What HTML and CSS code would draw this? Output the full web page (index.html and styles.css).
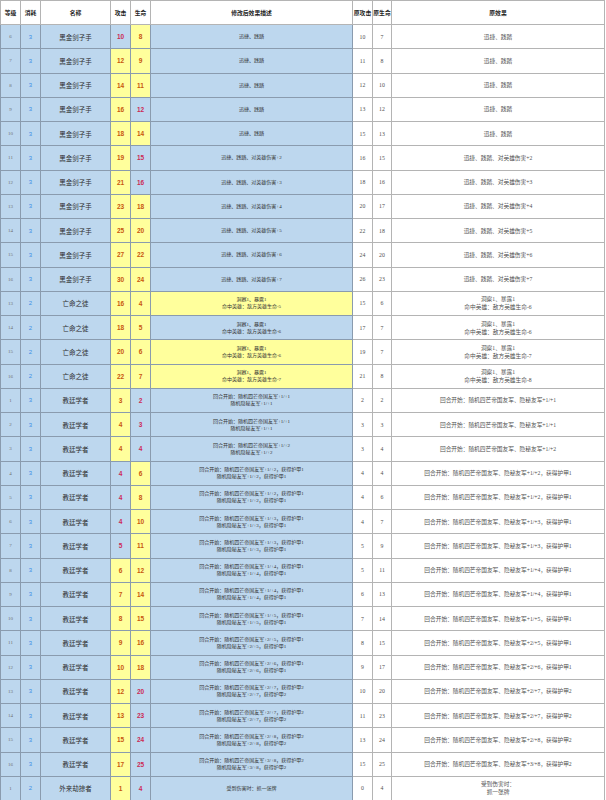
FILE: index.html
```html
<!DOCTYPE html>
<html lang="zh-CN">
<head>
<meta charset="utf-8">
<title>卡牌数值修改</title>
<link rel="stylesheet" href="styles.css">
</head>
<body>
<table class="sheet">
<colgroup>
<col class="c-lv"><col class="c-cost"><col class="c-name"><col class="c-atk"><col class="c-hp"><col class="c-desc"><col class="c-oatk"><col class="c-ohp"><col class="c-odesc">
</colgroup>
<thead>
<tr><th>等级</th><th>消耗</th><th>名称</th><th>攻击</th><th>生命</th><th>修改后效果描述</th><th>原攻击</th><th>原生命</th><th>原效果</th></tr>
</thead>
<tbody>
<tr><td class="lv">6</td><td class="cost">3</td><td class="name">黑金剑子手</td><td class="num">10</td><td class="num chg">8</td><td class="desc">迅捷、践踏</td><td class="orig">10</td><td class="orig">7</td><td class="odesc">迅捷、践踏</td></tr>
<tr><td class="lv">7</td><td class="cost">3</td><td class="name">黑金剑子手</td><td class="num chg">12</td><td class="num chg">9</td><td class="desc">迅捷、践踏</td><td class="orig">11</td><td class="orig">8</td><td class="odesc">迅捷、践踏</td></tr>
<tr><td class="lv">8</td><td class="cost">3</td><td class="name">黑金剑子手</td><td class="num chg">14</td><td class="num chg">11</td><td class="desc">迅捷、践踏</td><td class="orig">12</td><td class="orig">10</td><td class="odesc">迅捷、践踏</td></tr>
<tr><td class="lv">9</td><td class="cost">3</td><td class="name">黑金剑子手</td><td class="num chg">16</td><td class="num">12</td><td class="desc">迅捷、践踏</td><td class="orig">13</td><td class="orig">12</td><td class="odesc">迅捷、践踏</td></tr>
<tr><td class="lv">10</td><td class="cost">3</td><td class="name">黑金剑子手</td><td class="num chg">18</td><td class="num chg">14</td><td class="desc">迅捷、践踏</td><td class="orig">15</td><td class="orig">13</td><td class="odesc">迅捷、践踏</td></tr>
<tr><td class="lv">11</td><td class="cost">3</td><td class="name">黑金剑子手</td><td class="num chg">19</td><td class="num">15</td><td class="desc">迅捷、践踏、对英雄伤害+2</td><td class="orig">16</td><td class="orig">15</td><td class="odesc">迅捷、践踏、对英雄伤害+2</td></tr>
<tr><td class="lv">12</td><td class="cost">3</td><td class="name">黑金剑子手</td><td class="num chg">21</td><td class="num">16</td><td class="desc">迅捷、践踏、对英雄伤害+3</td><td class="orig">18</td><td class="orig">16</td><td class="odesc">迅捷、践踏、对英雄伤害+3</td></tr>
<tr><td class="lv">13</td><td class="cost">3</td><td class="name">黑金剑子手</td><td class="num chg">23</td><td class="num chg">18</td><td class="desc">迅捷、践踏、对英雄伤害+4</td><td class="orig">20</td><td class="orig">17</td><td class="odesc">迅捷、践踏、对英雄伤害+4</td></tr>
<tr><td class="lv">14</td><td class="cost">3</td><td class="name">黑金剑子手</td><td class="num chg">25</td><td class="num chg">20</td><td class="desc">迅捷、践踏、对英雄伤害+5</td><td class="orig">22</td><td class="orig">18</td><td class="odesc">迅捷、践踏、对英雄伤害+5</td></tr>
<tr><td class="lv">15</td><td class="cost">3</td><td class="name">黑金剑子手</td><td class="num chg">27</td><td class="num chg">22</td><td class="desc">迅捷、践踏、对英雄伤害+6</td><td class="orig">24</td><td class="orig">20</td><td class="odesc">迅捷、践踏、对英雄伤害+6</td></tr>
<tr><td class="lv">16</td><td class="cost">3</td><td class="name">黑金剑子手</td><td class="num chg">30</td><td class="num chg">24</td><td class="desc">迅捷、践踏、对英雄伤害+7</td><td class="orig">26</td><td class="orig">23</td><td class="odesc">迅捷、践踏、对英雄伤害+7</td></tr>
<tr><td class="lv">13</td><td class="cost">2</td><td class="name">亡命之徒</td><td class="num chg">16</td><td class="num chg">4</td><td class="desc chg">洞察1、暴露1<br>命中英雄：敌方英雄生命-5</td><td class="orig">15</td><td class="orig">6</td><td class="odesc">洞察1、暴露1<br>命中英雄：敌方英雄生命-6</td></tr>
<tr><td class="lv">14</td><td class="cost">2</td><td class="name">亡命之徒</td><td class="num chg">18</td><td class="num chg">5</td><td class="desc">洞察1、暴露1<br>命中英雄：敌方英雄生命-6</td><td class="orig">17</td><td class="orig">7</td><td class="odesc">洞察1、暴露1<br>命中英雄：敌方英雄生命-6</td></tr>
<tr><td class="lv">15</td><td class="cost">2</td><td class="name">亡命之徒</td><td class="num chg">20</td><td class="num chg">6</td><td class="desc chg">洞察1、暴露1<br>命中英雄：敌方英雄生命-6</td><td class="orig">19</td><td class="orig">7</td><td class="odesc">洞察1、暴露1<br>命中英雄：敌方英雄生命-7</td></tr>
<tr><td class="lv">16</td><td class="cost">2</td><td class="name">亡命之徒</td><td class="num chg">22</td><td class="num chg">7</td><td class="desc chg">洞察1、暴露1<br>命中英雄：敌方英雄生命-7</td><td class="orig">21</td><td class="orig">8</td><td class="odesc">洞察1、暴露1<br>命中英雄：敌方英雄生命-8</td></tr>
<tr><td class="lv">1</td><td class="cost">3</td><td class="name">教廷学者</td><td class="num chg">3</td><td class="num">2</td><td class="desc">回合开始：随机四芒帝国友军+1/+1<br>随机隐秘友军+1/+1</td><td class="orig">2</td><td class="orig">2</td><td class="odesc">回合开始：随机四芒帝国友军、隐秘友军+1/+1</td></tr>
<tr><td class="lv">2</td><td class="cost">3</td><td class="name">教廷学者</td><td class="num chg">4</td><td class="num">3</td><td class="desc">回合开始：随机四芒帝国友军+1/+1<br>随机隐秘友军+1/+1</td><td class="orig">3</td><td class="orig">3</td><td class="odesc">回合开始：随机四芒帝国友军、隐秘友军+1/+1</td></tr>
<tr><td class="lv">3</td><td class="cost">3</td><td class="name">教廷学者</td><td class="num chg">4</td><td class="num">4</td><td class="desc">回合开始：随机四芒帝国友军+1/+2<br>随机隐秘友军+1/+2</td><td class="orig">3</td><td class="orig">4</td><td class="odesc">回合开始：随机四芒帝国友军、隐秘友军+1/+2</td></tr>
<tr><td class="lv">4</td><td class="cost">3</td><td class="name">教廷学者</td><td class="num">4</td><td class="num chg">6</td><td class="desc">回合开始：随机四芒帝国友军+1/+2，获得护甲1<br>随机隐秘友军+1/+2，获得护甲1</td><td class="orig">4</td><td class="orig">4</td><td class="odesc">回合开始：随机四芒帝国友军、隐秘友军+1/+2，获得护甲1</td></tr>
<tr><td class="lv">5</td><td class="cost">3</td><td class="name">教廷学者</td><td class="num">4</td><td class="num chg">8</td><td class="desc">回合开始：随机四芒帝国友军+1/+2，获得护甲1<br>随机隐秘友军+1/+2，获得护甲1</td><td class="orig">4</td><td class="orig">6</td><td class="odesc">回合开始：随机四芒帝国友军、隐秘友军+1/+2，获得护甲1</td></tr>
<tr><td class="lv">6</td><td class="cost">3</td><td class="name">教廷学者</td><td class="num">4</td><td class="num chg">10</td><td class="desc">回合开始：随机四芒帝国友军+1/+3，获得护甲1<br>随机隐秘友军+1/+3，获得护甲1</td><td class="orig">4</td><td class="orig">7</td><td class="odesc">回合开始：随机四芒帝国友军、隐秘友军+1/+3，获得护甲1</td></tr>
<tr><td class="lv">7</td><td class="cost">3</td><td class="name">教廷学者</td><td class="num">5</td><td class="num chg">11</td><td class="desc">回合开始：随机四芒帝国友军+1/+3，获得护甲1<br>随机隐秘友军+1/+3，获得护甲1</td><td class="orig">5</td><td class="orig">9</td><td class="odesc">回合开始：随机四芒帝国友军、隐秘友军+1/+3，获得护甲1</td></tr>
<tr><td class="lv">8</td><td class="cost">3</td><td class="name">教廷学者</td><td class="num chg">6</td><td class="num chg">12</td><td class="desc">回合开始：随机四芒帝国友军+1/+4，获得护甲1<br>随机隐秘友军+1/+4，获得护甲1</td><td class="orig">5</td><td class="orig">11</td><td class="odesc">回合开始：随机四芒帝国友军、隐秘友军+1/+4，获得护甲1</td></tr>
<tr><td class="lv">9</td><td class="cost">3</td><td class="name">教廷学者</td><td class="num chg">7</td><td class="num chg">14</td><td class="desc">回合开始：随机四芒帝国友军+1/+4，获得护甲1<br>随机隐秘友军+1/+4，获得护甲1</td><td class="orig">6</td><td class="orig">13</td><td class="odesc">回合开始：随机四芒帝国友军、隐秘友军+1/+4，获得护甲1</td></tr>
<tr><td class="lv">10</td><td class="cost">3</td><td class="name">教廷学者</td><td class="num chg">8</td><td class="num chg">15</td><td class="desc">回合开始：随机四芒帝国友军+1/+5，获得护甲1<br>随机隐秘友军+1/+5，获得护甲1</td><td class="orig">7</td><td class="orig">14</td><td class="odesc">回合开始：随机四芒帝国友军、隐秘友军+1/+5，获得护甲1</td></tr>
<tr><td class="lv">11</td><td class="cost">3</td><td class="name">教廷学者</td><td class="num chg">9</td><td class="num chg">16</td><td class="desc">回合开始：随机四芒帝国友军+2/+5，获得护甲1<br>随机隐秘友军+2/+5，获得护甲1</td><td class="orig">8</td><td class="orig">15</td><td class="odesc">回合开始：随机四芒帝国友军、隐秘友军+2/+5，获得护甲1</td></tr>
<tr><td class="lv">12</td><td class="cost">3</td><td class="name">教廷学者</td><td class="num chg">10</td><td class="num chg">18</td><td class="desc">回合开始：随机四芒帝国友军+2/+6，获得护甲1<br>随机隐秘友军+2/+6，获得护甲1</td><td class="orig">9</td><td class="orig">17</td><td class="odesc">回合开始：随机四芒帝国友军、隐秘友军+2/+6，获得护甲1</td></tr>
<tr><td class="lv">13</td><td class="cost">3</td><td class="name">教廷学者</td><td class="num chg">12</td><td class="num">20</td><td class="desc">回合开始：随机四芒帝国友军+2/+7，获得护甲2<br>随机隐秘友军+2/+7，获得护甲2</td><td class="orig">10</td><td class="orig">20</td><td class="odesc">回合开始：随机四芒帝国友军、隐秘友军+2/+7，获得护甲2</td></tr>
<tr><td class="lv">14</td><td class="cost">3</td><td class="name">教廷学者</td><td class="num chg">13</td><td class="num">23</td><td class="desc">回合开始：随机四芒帝国友军+2/+7，获得护甲2<br>随机隐秘友军+2/+7，获得护甲2</td><td class="orig">11</td><td class="orig">23</td><td class="odesc">回合开始：随机四芒帝国友军、隐秘友军+2/+7，获得护甲2</td></tr>
<tr><td class="lv">15</td><td class="cost">3</td><td class="name">教廷学者</td><td class="num chg">15</td><td class="num">24</td><td class="desc">回合开始：随机四芒帝国友军+2/+8，获得护甲2<br>随机隐秘友军+2/+8，获得护甲2</td><td class="orig">13</td><td class="orig">24</td><td class="odesc">回合开始：随机四芒帝国友军、隐秘友军+2/+8，获得护甲2</td></tr>
<tr><td class="lv">16</td><td class="cost">3</td><td class="name">教廷学者</td><td class="num chg">17</td><td class="num">25</td><td class="desc">回合开始：随机四芒帝国友军+3/+8，获得护甲2<br>随机隐秘友军+3/+8，获得护甲2</td><td class="orig">15</td><td class="orig">25</td><td class="odesc">回合开始：随机四芒帝国友军、隐秘友军+3/+8，获得护甲2</td></tr>
<tr><td class="lv">1</td><td class="cost">2</td><td class="name">外来劫掠者</td><td class="num chg">1</td><td class="num">4</td><td class="desc">受到伤害时：抓一张牌</td><td class="orig">0</td><td class="orig">4</td><td class="odesc">受到伤害时：<br>抓一张牌</td></tr>
</tbody>
</table>
</body>
</html>
```
FILE: styles.css
```css
html, body {
  margin: 0;
  padding: 0;
  background: #ffffff;
}

.sheet {
  border-collapse: collapse;
  table-layout: fixed;
  width: 605px;
  font-family: "Noto Sans CJK SC", "Noto Sans", sans-serif;
  color: #333333;
}

.c-lv { width: 20px; }
.c-cost { width: 20px; }
.c-name { width: 70px; }
.c-atk { width: 20px; }
.c-hp { width: 20px; }
.c-desc { width: 202px; }
.c-oatk { width: 20px; }
.c-ohp { width: 19px; }
.c-odesc { width: 213px; }

.sheet th,
.sheet td {
  padding: 0;
  text-align: center;
  vertical-align: middle;
  white-space: nowrap;
  overflow: hidden;
}

.sheet thead tr { height: 24px; }
.sheet tbody tr { height: 24.25px; }

.sheet th {
  background: #ffffff;
  border: 1px solid #b4b4b4;
  font-weight: bold;
  font-size: 5.8px;
  color: #1e1e1e;
}

.lv, .cost, .name, .num, .desc {
  background: #bdd7ee;
  border: 1px solid #8a9bae;
}

.lv {
  font-family: "Liberation Serif", serif;
  font-size: 5px;
  color: #6f6f6f;
}

.cost {
  font-family: "Liberation Sans", Arial, sans-serif;
  font-size: 6px;
  color: #3a8ee6;
}

.name {
  font-size: 6.5px;
  color: #2e2e2e;
}

.num {
  font-family: "Liberation Sans", Arial, sans-serif;
  font-weight: bold;
  font-size: 6.5px;
  color: #cc2a55;
}

.num.chg {
  background: #ffff9c;
  color: #c8560e;
}

.desc {
  font-family: "Liberation Serif", "Noto Sans CJK SC", serif;
  font-size: 5px;
  line-height: 7px;
  color: #333333;
}

.desc.chg {
  background: #ffff9c;
}

.orig, .odesc {
  background: #ffffff;
  border: 1px solid #b4b4b4;
  color: #505050;
}

.orig {
  font-family: "Liberation Serif", serif;
  font-size: 5.8px;
}

.odesc {
  font-family: "Liberation Serif", "Noto Sans CJK SC", serif;
  font-size: 5.7px;
  line-height: 8px;
}
```
